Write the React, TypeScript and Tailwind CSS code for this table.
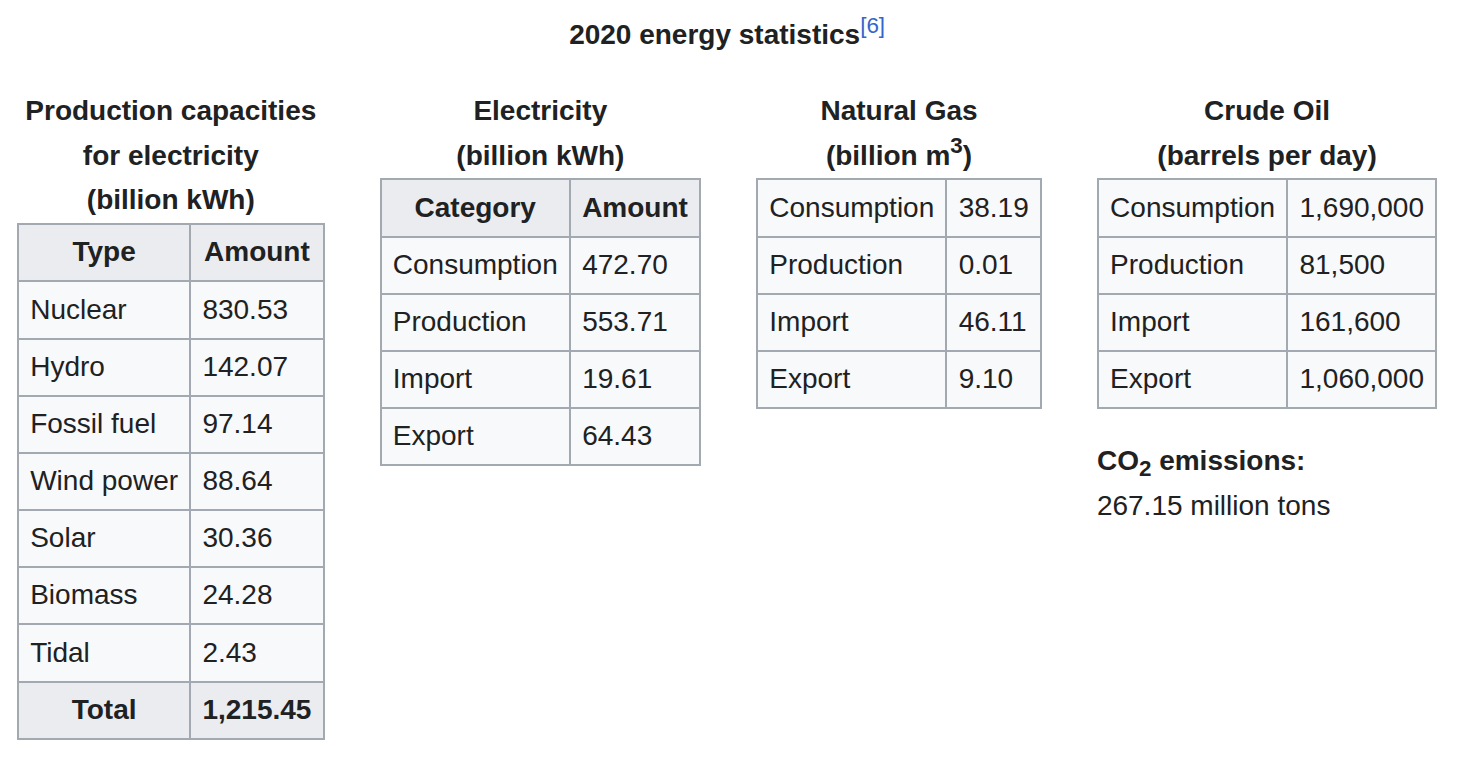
import type { ReactNode } from 'react';

type Row = [string, string];

const cell = 'border-2 border-[#a2a9b1] px-[11.2px] py-[5.2px] text-left font-normal';
const head = 'border-2 border-[#a2a9b1] px-[11.2px] py-[5.2px] bg-[#eaecf0] font-bold text-center';

const capacities: Row[] = [
  ['Nuclear', '830.53'],
  ['Hydro', '142.07'],
  ['Fossil fuel', '97.14'],
  ['Wind power', '88.64'],
  ['Solar', '30.36'],
  ['Biomass', '24.28'],
  ['Tidal', '2.43'],
];

const electricity: Row[] = [
  ['Consumption', '472.70'],
  ['Production', '553.71'],
  ['Import', '19.61'],
  ['Export', '64.43'],
];

const gas: Row[] = [
  ['Consumption', '38.19'],
  ['Production', '0.01'],
  ['Import', '46.11'],
  ['Export', '9.10'],
];

const oil: Row[] = [
  ['Consumption', '1,690,000'],
  ['Production', '81,500'],
  ['Import', '161,600'],
  ['Export', '1,060,000'],
];

const StatTable = ({
  caption,
  rows,
  header,
  footer,
}: {
  caption: ReactNode;
  rows: Row[];
  header?: Row;
  footer?: Row;
}) => (
  <table className="border-collapse bg-[#f8f9fa]">
    <caption className="font-bold text-center bg-white">{caption}</caption>
    <tbody>
      {header && (
        <tr>
          <th className={head}>{header[0]}</th>
          <th className={head}>{header[1]}</th>
        </tr>
      )}
      {rows.map(([label, value]) => (
        <tr key={label}>
          <td className={cell}>{label}</td>
          <td className={cell}>{value}</td>
        </tr>
      ))}
      {footer && (
        <tr>
          <th className={head}>{footer[0]}</th>
          <th className={`${head} !text-left`}>{footer[1]}</th>
        </tr>
      )}
    </tbody>
  </table>
);

export default function App() {
  return (
    <div
      className="min-h-screen bg-white text-[#202122] text-[28px] leading-[1.6]"
      style={{ fontFamily: '"Liberation Sans", Arial, Helvetica, sans-serif' }}
    >
      <div className="ml-[17px] w-fit pt-[13px]">
        {/* Title */}
        <div className="font-bold text-center">
          2020 energy statistics
          <sup className="text-[80%] font-normal leading-none text-[#3366cc]">[6]</sup>
        </div>

        <div className="flex items-start gap-[55px] mt-[31px]">
          <StatTable
            caption={
              <>
                Production capacities
                <br />
                for electricity
                <br />
                (billion kWh)
              </>
            }
            header={['Type', 'Amount']}
            rows={capacities}
            footer={['Total', '1,215.45']}
          />

          <StatTable
            caption={
              <>
                Electricity
                <br />
                (billion kWh)
              </>
            }
            header={['Category', 'Amount']}
            rows={electricity}
          />

          <StatTable
            caption={
              <>
                Natural Gas
                <br />
                (billion m<sup className="text-[80%] leading-none">3</sup>)
              </>
            }
            rows={gas}
          />

          <div className="flex flex-col">
            <StatTable
              caption={
                <>
                  Crude Oil
                  <br />
                  (barrels per day)
                </>
              }
              rows={oil}
            />
            <div className="mt-[30px]">
              <div className="font-bold">
                CO<sub className="text-[80%] leading-none">2</sub> emissions:
              </div>
              <div>267.15 million tons</div>
            </div>
          </div>
        </div>
      </div>
    </div>
  );
}
